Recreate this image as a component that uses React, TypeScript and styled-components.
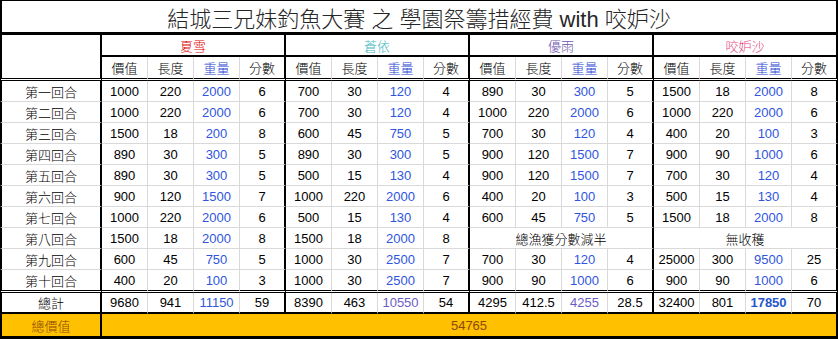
import React from 'react';
import styled, { createGlobalStyle } from 'styled-components';

type Entry = [string, string, string, string] | string;

interface Player {
  name: string;
  color: string;
  rounds: Entry[];
  total: [string, string, string, string];
  totalTone: string;
  totalBold?: boolean;
}

const ROUND_NAMES = ['第一回合', '第二回合', '第三回合', '第四回合', '第五回合', '第六回合', '第七回合', '第八回合', '第九回合', '第十回合'];
const SUB_HEADS = ['價值', '長度', '重量', '分數'];

const players: Player[] = [
  {
    name: '夏雪',
    color: '#e00000',
    rounds: [
      ['1000', '220', '2000', '6'],
      ['1000', '220', '2000', '6'],
      ['1500', '18', '200', '8'],
      ['890', '30', '300', '5'],
      ['890', '30', '300', '5'],
      ['900', '120', '1500', '7'],
      ['1000', '220', '2000', '6'],
      ['1500', '18', '2000', '8'],
      ['600', '45', '750', '5'],
      ['400', '20', '100', '3'],
    ],
    total: ['9680', '941', '11150', '59'],
    totalTone: '#3358dc',
  },
  {
    name: '蒼依',
    color: '#45b9c4',
    rounds: [
      ['700', '30', '120', '4'],
      ['700', '30', '120', '4'],
      ['600', '45', '750', '5'],
      ['890', '30', '300', '5'],
      ['500', '15', '130', '4'],
      ['1000', '220', '2000', '6'],
      ['500', '15', '130', '4'],
      ['1500', '18', '2000', '8'],
      ['1000', '30', '2500', '7'],
      ['1000', '30', '2500', '7'],
    ],
    total: ['8390', '463', '10550', '54'],
    totalTone: '#6a5cc6',
  },
  {
    name: '優雨',
    color: '#6e55b0',
    rounds: [
      ['890', '30', '300', '5'],
      ['1000', '220', '2000', '6'],
      ['700', '30', '120', '4'],
      ['900', '120', '1500', '7'],
      ['900', '120', '1500', '7'],
      ['400', '20', '100', '3'],
      ['600', '45', '750', '5'],
      '總漁獲分數減半',
      ['700', '30', '120', '4'],
      ['900', '90', '1000', '6'],
    ],
    total: ['4295', '412.5', '4255', '28.5'],
    totalTone: '#6a5cc6',
  },
  {
    name: '咬妒沙',
    color: '#e4407c',
    rounds: [
      ['1500', '18', '2000', '8'],
      ['1000', '220', '2000', '6'],
      ['400', '20', '100', '3'],
      ['900', '90', '1000', '6'],
      ['700', '30', '120', '4'],
      ['500', '15', '130', '4'],
      ['1500', '18', '2000', '8'],
      '無收穫',
      ['25000', '300', '9500', '25'],
      ['900', '90', '1000', '6'],
    ],
    total: ['32400', '801', '17850', '70'],
    totalTone: '#2456cc',
    totalBold: true,
  },
];

const GRID = '#d9d9d9';
const WEIGHT_BLUE = '#2f55e0';

const GlobalStyle = createGlobalStyle`
  * { box-sizing: border-box; }
  body {
    margin: 0;
    background: #fff;
    font-family: "Liberation Sans", "Noto Sans CJK TC", sans-serif;
    color: #000;
  }
`;

const Sheet = styled.div`
  display: grid;
  grid-template-columns: 102px repeat(16, 46px);
  width: 838px;
  font-size: 13px;
  font-weight: 300;
`;

const TitleCell = styled.div`
  grid-column: 1 / -1;
  height: 35px;
  border: 2px solid #000;
  border-top-width: 1px;
  border-bottom-width: 3px;
  display: flex;
  align-items: center;
  justify-content: center;
  font-size: 22px;
  color: #262626;
  white-space: pre;
`;

const CornerCell = styled.div`
  grid-row: span 2;
  border-left: 2px solid #000;
  border-right: 2px solid #000;
  border-bottom: 3px double #000;
`;

const NameCell = styled.div<{ $color: string }>`
  grid-column: span 4;
  height: 22px;
  border-right: 2px solid #000;
  border-bottom: 2px solid #000;
  display: flex;
  align-items: center;
  justify-content: center;
  color: ${(p) => p.$color};
`;

const SubHead = styled.div<{ $end: boolean; $blue: boolean }>`
  height: 24px;
  border-right: ${(p) => (p.$end ? '2px solid #000' : `1px solid ${GRID}`)};
  border-bottom: 3px double #000;
  display: flex;
  align-items: center;
  justify-content: center;
  color: ${(p) => (p.$blue ? '#1f45d2' : '#000')};
`;

const RowLabel = styled.div<{ $last: boolean }>`
  height: ${(p) => (p.$last ? '23px' : '21px')};
  border-left: 2px solid #000;
  border-right: 2px solid #000;
  border-bottom: ${(p) => (p.$last ? '3px double #000' : `1px solid ${GRID}`)};
  display: flex;
  align-items: center;
  justify-content: center;
`;

const ValueCell = styled.div<{ $end: boolean; $last: boolean; $tone: string }>`
  height: ${(p) => (p.$last ? '23px' : '21px')};
  border-right: ${(p) => (p.$end ? '2px solid #000' : `1px solid ${GRID}`)};
  border-bottom: ${(p) => (p.$last ? '3px double #000' : `1px solid ${GRID}`)};
  display: flex;
  align-items: center;
  justify-content: center;
  color: ${(p) => p.$tone};
`;

const MergedCell = styled.div`
  grid-column: span 4;
  height: 21px;
  border-right: 2px solid #000;
  border-bottom: 1px solid ${GRID};
  display: flex;
  align-items: center;
  justify-content: center;
`;

const TotalLabel = styled.div`
  height: 21px;
  border-left: 2px solid #000;
  border-right: 2px solid #000;
  border-bottom: 2px solid #000;
  display: flex;
  align-items: center;
  justify-content: center;
`;

const TotalCell = styled.div<{ $end: boolean; $tone: string; $bold: boolean }>`
  height: 21px;
  border-right: ${(p) => (p.$end ? '2px solid #000' : `1px solid ${GRID}`)};
  border-bottom: 2px solid #000;
  display: flex;
  align-items: center;
  justify-content: center;
  color: ${(p) => p.$tone};
  font-weight: ${(p) => (p.$bold ? 700 : 300)};
`;

const GrandLabel = styled.div`
  height: 25px;
  background: #ffc000;
  border-left: 2px solid #000;
  border-right: 2px solid #000;
  border-bottom: 3px solid #000;
  display: flex;
  align-items: center;
  justify-content: center;
  color: #8a4a08;
`;

const GrandValue = styled.div`
  grid-column: span 16;
  height: 25px;
  background: #ffc000;
  border-right: 2px solid #000;
  border-bottom: 3px solid #000;
  display: flex;
  align-items: center;
  justify-content: center;
  color: #8a4a08;
`;

const App = () => (
  <>
    <GlobalStyle />
    <Sheet>
      <TitleCell>{'結城三兄妹釣魚大賽 之 學園祭籌措經費 with 咬妒沙'}</TitleCell>

      <CornerCell />
      {players.map((p) => (
        <NameCell key={p.name} $color={p.color}>
          {p.name}
        </NameCell>
      ))}
      {players.map((p) =>
        SUB_HEADS.map((h, i) => (
          <SubHead key={p.name + h} $end={i === 3} $blue={i === 2}>
            {h}
          </SubHead>
        )),
      )}

      {ROUND_NAMES.map((round, r) => {
        const last = r === ROUND_NAMES.length - 1;
        return (
          <React.Fragment key={round}>
            <RowLabel $last={last}>{round}</RowLabel>
            {players.map((p) => {
              const entry = p.rounds[r];
              if (typeof entry === 'string') {
                return <MergedCell key={p.name}>{entry}</MergedCell>;
              }
              return entry.map((v, i) => (
                <ValueCell key={p.name + i} $end={i === 3} $last={last} $tone={i === 2 ? WEIGHT_BLUE : '#000'}>
                  {v}
                </ValueCell>
              ));
            })}
          </React.Fragment>
        );
      })}

      <TotalLabel>總計</TotalLabel>
      {players.map((p) =>
        p.total.map((v, i) => (
          <TotalCell
            key={p.name + 'total' + i}
            $end={i === 3}
            $tone={i === 2 ? p.totalTone : '#000'}
            $bold={i === 2 && !!p.totalBold}
          >
            {v}
          </TotalCell>
        )),
      )}

      <GrandLabel>總價值</GrandLabel>
      <GrandValue>54765</GrandValue>
    </Sheet>
  </>
);

export default App;
